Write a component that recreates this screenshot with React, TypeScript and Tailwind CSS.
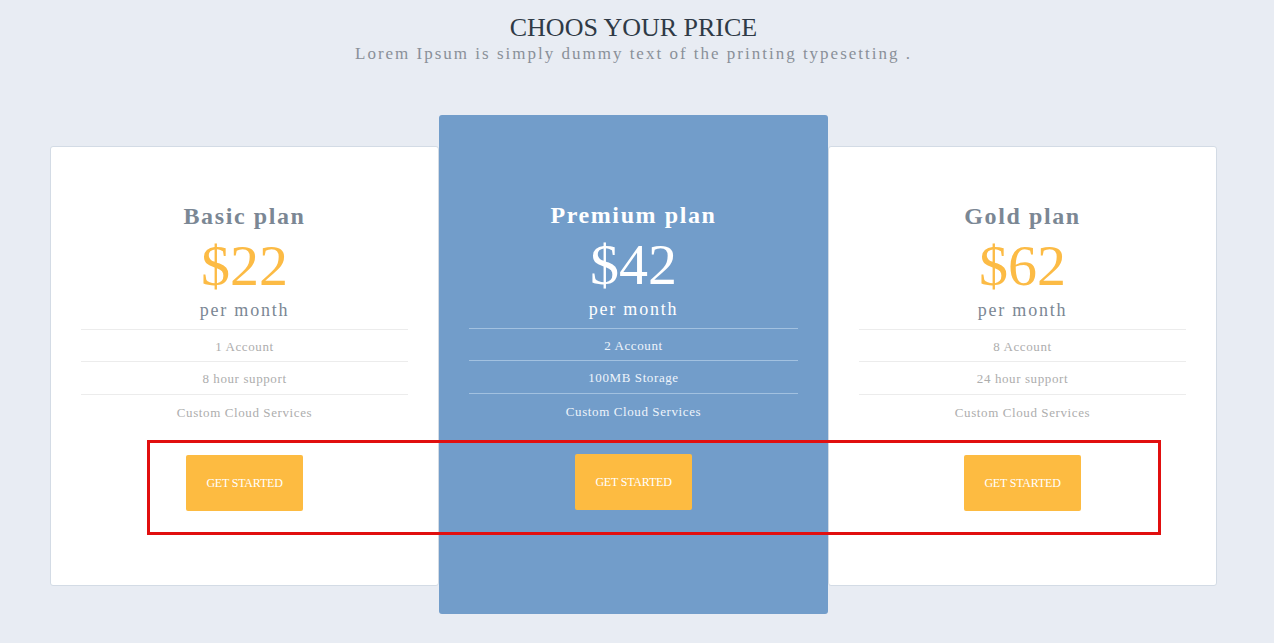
import React from "react";

type Plan = {
  name: string;
  price: string;
  features: string[];
  featured?: boolean;
};

const plans: Plan[] = [
  { name: "Basic plan", price: "$22", features: ["1 Account", "8 hour support", "Custom Cloud Services"] },
  { name: "Premium plan", price: "$42", features: ["2 Account", "100MB Storage", "Custom Cloud Services"], featured: true },
  { name: "Gold plan", price: "$62", features: ["8 Account", "24 hour support", "Custom Cloud Services"] },
];

function Card({ plan }: { plan: Plan }) {
  const f = plan.featured;
  return (
    <div
      className={
        f
          ? "w-[389px] h-[499px] rounded-[3px] bg-[#729dca] pt-[85px] flex flex-col items-center"
          : "w-[389px] h-[440px] mt-[31px] rounded-[3px] bg-white border border-[#d3dbe5] pt-[54px] flex flex-col items-center"
      }
    >
      <div
        className={
          "h-[30px] leading-[30px] text-[24px] font-bold tracking-[1.6px] " +
          (f ? "text-white" : "text-[#7b8794]")
        }
      >
        {plan.name}
      </div>
      <div className={"mt-[5px] h-[60px] leading-[60px] text-[58px] " + (f ? "text-white" : "text-[#fcbb45]")}>
        {plan.price}
      </div>
      <div
        className={
          "mt-[2px] h-[24px] leading-[24px] text-[18px] tracking-[1.8px] " + (f ? "text-white" : "text-[#7b8794]")
        }
      >
        per month
      </div>
      <ul className="mt-[7px] self-stretch mx-[30px]">
        {plan.features.map((ft, i) => (
          <li
            key={ft}
            className={
              "h-[33px] pt-[2px] flex items-center justify-center text-[13px] tracking-[0.6px] " +
              (i === 0 ? "border-t " : "") +
              (i < 2 ? "border-b " : "") +
              (f ? "border-[#a2c1e0] text-[#eef4fb]" : "border-[#ececec] text-[#adadad]")
            }
          >
            {ft}
          </li>
        ))}
      </ul>
      <button className="mt-[27px] w-[117px] h-[56px] rounded-[2px] bg-[#fdbb41] text-white text-[12px] tracking-[-0.2px]">
        GET STARTED
      </button>
    </div>
  );
}

export default function App() {
  return (
    <div className="relative min-h-[643px] w-full bg-[#e8ecf3] overflow-hidden font-['Liberation_Serif','DejaVu_Serif',serif]">
      <div className="ml-[50px] w-[1167px] pt-[13px] flex flex-col items-center">
        <h1 className="h-[30px] leading-[30px] text-[26px] text-[#2f3a46]">CHOOS YOUR PRICE</h1>
        <p className="mt-[1px] h-[20px] leading-[20px] text-[17px] tracking-[2px] text-[#8a9099]">
          Lorem Ipsum is simply dummy text of the printing typesetting .
        </p>
        <div className="mt-[51px] flex items-start self-stretch">
          {plans.map((p) => (
            <Card key={p.name} plan={p} />
          ))}
        </div>
      </div>
      <div className="absolute left-[147px] top-[440px] w-[1014px] h-[95px] border-[3px] border-[#e10f0f] pointer-events-none" />
    </div>
  );
}
